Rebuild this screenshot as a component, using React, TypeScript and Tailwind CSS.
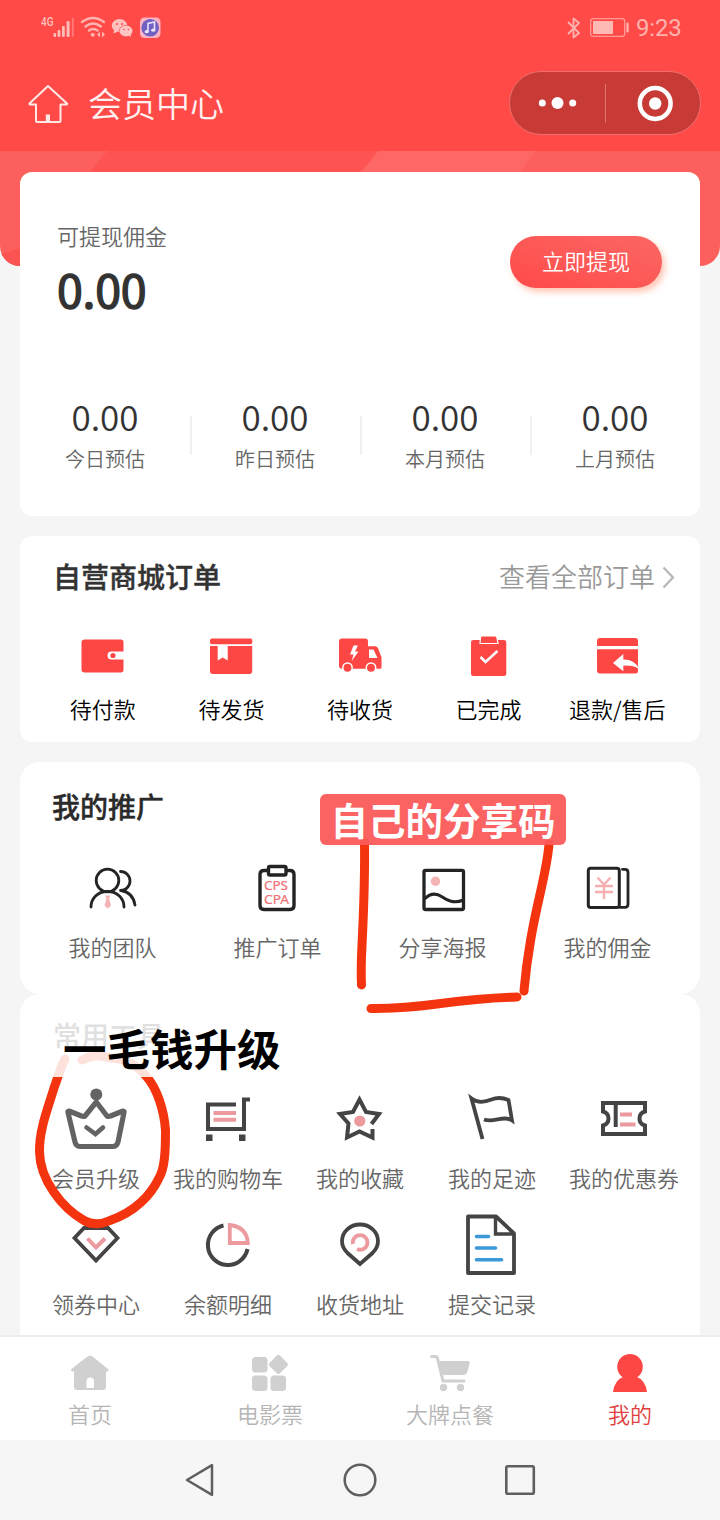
import type { ReactNode } from "react";

type IconProps = { box: string; w: number; h: number; children: ReactNode; className?: string };

function Icon({ box, w, h, children, className }: IconProps) {
  return (
    <svg viewBox={box} width={w} height={h} fill="none" className={className}>
      {children}
    </svg>
  );
}

const RED = "#fd4745";
const INK = "#242424";
const DARK = "#444444";
const PINK = "#ec9a9e";
const GREY = "#d0d0d0";

function StatusBar() {
  return (
    <div className="flex h-14 items-center justify-between pl-[41px] pr-[38px]">
      <Icon box="41 0 122 56" w={122} h={56}>
        <text x="41" y="26" fontSize="12.5" fontWeight="500" fontFamily="Roboto, sans-serif" fill="#ffc0bc" textLength="12.5" lengthAdjust="spacingAndGlyphs">4G</text>
        <g fill="#ffbdb8">
          <rect x="53.5" y="33" width="2.6" height="4" rx="1" />
          <rect x="57.6" y="30" width="2.8" height="7" rx="1" />
          <rect x="62" y="26" width="2.8" height="11" rx="1" />
          <rect x="66.6" y="21" width="3" height="16" rx="1" />
          <rect x="71.8" y="18" width="2" height="19" rx="1" opacity=".4" />
        </g>
        <g stroke="#ffb3ae" strokeWidth="2.4" strokeLinecap="round">
          <path d="M82 22q11-8 22 0M85.500 26.500q7.500-6 15.500 0M89 30.500q4-3 8.500 0" />
        </g>
        <circle cx="92.700" cy="34.700" r="2" fill="#ffb3ae" />
        <path d="m97 34.500 3-3v6zM105 34.500l-3-3v6z" fill="#ffb3ae" />
        <g fill="#ffc0bd">
          <ellipse cx="119.500" cy="25.500" rx="7.800" ry="6.500" />
          <path d="m114 29-.500 4.500 4.500-2z" />
        </g>
        <ellipse cx="126" cy="31" rx="6.800" ry="5.700" fill="#ffc7c3" stroke={RED} strokeWidth=".6" />
        <path d="m128 35 3 2-.600-3.500z" fill="#ffc7c3" />
        <g fill={RED}>
          <circle cx="117" cy="24" r="1" /><circle cx="122" cy="24" r="1" />
          <circle cx="124" cy="29.500" r=".8" /><circle cx="128.500" cy="29.500" r=".8" />
        </g>
        <rect x="140" y="17.500" width="20.500" height="20.500" rx="4.500" fill="#fbb3c3" />
        <circle cx="150.200" cy="27.700" r="8.800" fill="#7161c2" />
        <path d="M148 31.500v-8l6.500-1.500v8" stroke="#eae3fb" strokeWidth="1.600" />
        <ellipse cx="146.700" cy="31.700" rx="2.100" ry="1.600" fill="#eae3fb" />
        <ellipse cx="153.200" cy="30.200" rx="2.100" ry="1.600" fill="#eae3fb" />
      </Icon>
      <div className="flex items-center gap-[6px]">
        <Icon box="567 14 64 28" w={64} h={28}>
          <path d="m569 22 11 11-5.500 4.500v-19L580 23l-11 11" stroke="#ffb3ae" strokeWidth="1.800" strokeLinejoin="round" />
          <rect x="591.700" y="18.700" width="34" height="17.600" rx="2.500" stroke="#ff9b97" strokeWidth="1.300" />
          <rect x="594" y="21" width="20" height="13" fill="#ffb9b5" />
          <rect x="627.400" y="22.500" width="2.300" height="10" rx="1" fill="#ffb3ae" />
        </Icon>
        <span className="w-[46px] whitespace-nowrap font-[Roboto] text-[24px] leading-7 tracking-[-0.2px] text-[#ffb3ae]">9:23</span>
      </div>
    </div>
  );
}

function Header() {
  return (
    <header className="h-[151px] bg-[#ff4a48]">
      <StatusBar />
      <div className="flex h-[95px] items-center pl-[27px] pr-[19px]">
        <Icon box="27 82 42 42" w={42} h={42}>
          <path d="M48 85 29.500 102.500q-.500 1 1 1h5.500V120q0 1 1 1h22.500q1 0 1-1v-16.500H66q1.500 0 1-1Z" stroke="#ffe9e7" strokeWidth="2" strokeLinejoin="round" />
          <rect x="45.800" y="113.500" width="4.200" height="7" fill="#ffe9e7" />
        </Icon>
        <h1 className="ml-[19px] flex-1 pb-[2px] text-[34px] font-[350] leading-[46px] text-[#fff1f0]">会员中心</h1>
        <div className="mt-[-1px] flex h-[64px] w-[192px] rounded-full border border-[#e9706d] bg-[#c83a36]">
          <Icon box="510 72 190 62" w={190} h={62}>
            <g fill="#fff">
              <circle cx="542.300" cy="103" r="3.500" />
              <circle cx="557.500" cy="103" r="6" />
              <circle cx="572.700" cy="103" r="3.500" />
              <circle cx="655.200" cy="103.500" r="6.200" />
            </g>
            <path d="M605.500 84v38.500" stroke="#df7370" />
            <circle cx="655.200" cy="103.500" r="15.400" stroke="#fff" strokeWidth="4.500" />
          </Icon>
        </div>
      </div>
    </header>
  );
}

const stats = ["今日预估", "昨日预估", "本月预估", "上月预估"];

function Balance() {
  return (
    <section className="relative mx-5 mt-[-94px] h-[344px] rounded-[12px] bg-white pt-12">
      <div className="flex h-[104px] justify-between pl-[37px] pr-[38px]">
        <div>
          <p className="text-[22px] font-[350] leading-[30px] text-[#666]">可提现佣金</p>
          <p className="pt-[12px] text-[46.500px] leading-[52px] tracking-[-0.300px] text-[#333] [-webkit-text-stroke:1.4px_#333]">0.00</p>
        </div>
        <button className="mt-4 h-[52px] w-[152px] rounded-full bg-linear-to-tr from-[#ff4a49] to-[#fb6663] pb-[4px] text-[22px] font-[350] text-white shadow-[3px_4px_6px_rgba(255,130,90,0.45)]">立即提现</button>
      </div>
      <div className="grid grid-cols-4 pt-[72px]">
        {stats.map((name, i) => (
          <div key={name} className="relative text-center">
            <p className="text-[35px] font-[350] leading-[40px] text-[#333]">0.00</p>
            <p className="pt-[8px] text-[20px] font-[350] leading-[30px] text-[#666]">{name}</p>
            {i < 3 && <span className="absolute right-[-2px] top-5 h-[39px] w-[2px] bg-[#f0f0f0]" />}
          </div>
        ))}
      </div>
    </section>
  );
}

const orders = [
  {
    name: "待付款",
    icon: (
      <Icon box="78 632 50 48" w={50} h={48}>
        <path d="M84.500 639.500H121q2.500 0 2.500 3v9h-12a4 4 0 0 0 0 8h12v10q0 3-2.500 3H84.500q-3 0-3-3v-27q0-3 3-3Z" fill={RED} />
        <circle cx="113" cy="655.500" r="2.600" fill={RED} />
      </Icon>
    ),
  },
  {
    name: "待发货",
    icon: (
      <Icon box="206 632 50 48" w={50} h={48}>
        <rect x="210" y="638.500" width="42.300" height="5.800" rx="2" fill={RED} />
        <path d="M210 646h7.700v14.500l5-3 5 3V646h24.500v25q0 3-3 3H213q-3 0-3-3Z" fill={RED} />
      </Icon>
    ),
  },
  {
    name: "待收货",
    icon: (
      <Icon box="335 632 50 48" w={50} h={48}>
        <path d="M342 638.500h23q3 0 3 3v4.800h7q2 0 3 2l3.500 9v10q0 1.500-1.500 1.500h-38q-3 0-3-3v-24.300q0-3 3-3Z" fill={RED} />
        <path d="M369 649.500h4.500l4 8.500H369Z" fill="#fff" />
        <path d="m353.500 645.500-3.500 9h3.500l-1.800 6.500 6.800-9.500H355l3-6Z" fill="#fff" />
        <circle cx="347.500" cy="667.700" r="4.700" fill={RED} stroke="#fff" strokeWidth="1.500" />
        <circle cx="371" cy="667.700" r="4.700" fill={RED} stroke="#fff" strokeWidth="1.500" />
      </Icon>
    ),
  },
  {
    name: "已完成",
    icon: (
      <Icon box="464 632 50 48" w={50} h={48}>
        <rect x="471" y="640" width="35.300" height="36" rx="2.500" fill={RED} />
        <path d="M482 636h13q2 0 2 2l1 5.500h-18l.500-5.500q0-2 1.500-2Z" fill={RED} stroke="#fff" strokeWidth="1.200" />
        <path d="m480.500 657 5 5 12-11" stroke="#fff" strokeWidth="2.500" />
      </Icon>
    ),
  },
  {
    name: "退款/售后",
    icon: (
      <Icon box="592 632 50 48" w={50} h={48}>
        <path d="M600 638h35q3 0 3 3v5h-41v-5q0-3 3-3Z" fill={RED} />
        <path d="M597 649.300h41V671q0 2.500-2.500 2.500H600q-3 0-3-3Z" fill={RED} />
        <path d="m613 663 10.300-9v5.500q12 0 15.700 9.500-6-4-15.700-3.300v5.500Z" fill="#fff" />
      </Icon>
    ),
  },
];

function Orders() {
  return (
    <section className="mx-5 mt-5 h-[206px] rounded-[12px] bg-white pt-[20px]">
      <div className="flex h-10 items-center justify-between pl-[33px] pr-[24px]">
        <h2 className="text-[28px] font-medium leading-10 text-[#333] [-webkit-text-stroke:0.4px_#333]">自营商城订单</h2>
        <div className="flex items-center gap-[6px]">
          <span className="text-[26px] font-[350] leading-10 text-[#999]">查看全部订单</span>
          <Icon box="661 564 15 25" w={15} h={25}>
            <path d="m663.500 567.500 9.500 10-9.500 10" stroke="#b8b8b8" strokeWidth="2.300" />
          </Icon>
        </div>
      </div>
      <div className="grid grid-cols-5 px-[18.500px] pt-[36px]">
        {orders.map((o) => (
          <div key={o.name} className="flex flex-col items-center">
            {o.icon}
            <span className="whitespace-nowrap pt-[13px] text-[22px] font-[350] leading-[30px] text-black">{o.name}</span>
          </div>
        ))}
      </div>
    </section>
  );
}

const promos = [
  {
    name: "我的团队",
    icon: (
      <Icon box="85 862 56 52" w={56} h={52}>
        <g stroke={INK} strokeWidth="2.800" strokeLinecap="round">
          <circle cx="107.500" cy="880.500" r="11.300" />
          <path d="M91 907c0-8 6-15.500 16.500-15.500S124 899 124 907M120.500 871.500a9.500 9.500 0 0 1 0 19M121 890.500q12 2 14 14.500" />
        </g>
        <path d="M105 895.500h5.500l-1.500 3 2 7-3.200 3-3.300-3 2-7Z" fill="#f6b3b5" />
      </Icon>
    ),
  },
  {
    name: "推广订单",
    icon: (
      <Icon box="250 862 56 52" w={56} h={52}>
        <path d="M269 870.500h-5q-4 0-4 4v31q0 4 4 4h26q4 0 4-4v-31q0-4-4-4h-5" stroke={INK} strokeWidth="3.400" />
        <rect x="268.500" y="866.500" width="17.500" height="8.500" rx="1.500" stroke={INK} strokeWidth="3.400" />
        <g fontFamily="Noto Sans, sans-serif" fontSize="13" fill="#f07275" stroke="#f07275" strokeWidth=".2">
          <text x="264" y="890" textLength="24" lengthAdjust="spacingAndGlyphs">CPS</text>
          <text x="264" y="903.500" textLength="25" lengthAdjust="spacingAndGlyphs">CPA</text>
        </g>
      </Icon>
    ),
  },
  {
    name: "分享海报",
    icon: (
      <Icon box="415.500 862 56 52" w={56} h={52}>
        <rect x="424.500" y="870.300" width="39.500" height="39.200" rx="1.500" stroke={INK} strokeWidth="3.300" />
        <path d="M425 899c5-5 11-6.500 17-2.500 6 4 12 7.500 22 3.500" stroke={INK} strokeWidth="3" />
        <circle cx="436" cy="881.300" r="4.700" fill="#f6b3b5" />
      </Icon>
    ),
  },
  {
    name: "我的佣金",
    icon: (
      <Icon box="580 862 56 52" w={56} h={52}>
        <rect x="588.300" y="868.300" width="31" height="39.200" rx="2.500" stroke={INK} strokeWidth="3" />
        <path d="M622.500 869.300h2.500q3 0 3 3v32q0 3-3 3h-5" stroke={INK} strokeWidth="2.800" strokeLinecap="round" />
        <path d="m597.500 877.500 6.500 7 6.500-7M604 884.500V899M595 886h18M595 892h18" stroke="#f6aeb1" strokeWidth="2.300" />
      </Icon>
    ),
  },
];

function Promotion() {
  return (
    <section className="mx-5 mt-5 h-[232px] rounded-[20px] bg-white pt-[24px]">
      <h2 className="pl-[32px] text-[28px] font-medium leading-10 text-[#2a2a2a] [-webkit-text-stroke:0.4px_#2a2a2a]">我的推广</h2>
      <div className="mx-[10px] grid grid-cols-4 pt-[36px]">
        {promos.map((p) => (
          <div key={p.name} className="flex flex-col items-center">
            {p.icon}
            <span className="pt-[17px] text-[22px] font-[350] leading-[30px] text-[#666]">{p.name}</span>
          </div>
        ))}
      </div>
    </section>
  );
}

const tools = [
  {
    name: "会员升级",
    icon: (
      <Icon box="64 1086 64 66" w={64} h={66}>
        <circle cx="96.300" cy="1094.500" r="6" fill="#636363" />
        <path d="M96.300 1102 85 1116q-1.500 1-3.500 0l-12.500-5q-1.500 0-1 1.500l7 29.500q1 4.500 5 4.500h33q4 0 5-4.500l6-29.500q.500-1.500-1-1.500l-12.500 5q-2 1-3.500 0Z" stroke="#636363" strokeWidth="5.200" strokeLinejoin="round" />
        <path d="m86.500 1127.500 9 6.500 7.500-6.500" stroke="#636363" strokeWidth="4.600" strokeLinecap="round" />
      </Icon>
    ),
  },
  {
    name: "我的购物车",
    icon: (
      <Icon box="196 1086 64 66" w={64} h={66}>
        <path d="M236 1104.500h-28V1129h36v-29.500h6" stroke={DARK} strokeWidth="4" />
        <path d="M206 1134.500h6.500v6.500H206zM239 1134.500h6.500v6.500H239z" fill={DARK} />
        <path d="M213.500 1113h22.500M213.500 1119.800h22.500" stroke={PINK} strokeWidth="4" />
      </Icon>
    ),
  },
  {
    name: "我的收藏",
    icon: (
      <Icon box="328 1086 64 66" w={64} h={66}>
        <path d="m371.500 1124 7.500-10-13-2-6.500-12.500-6.500 12.500-13 2 8.500 9.500-1.500 14 12.500-6 13 6v-8.500" stroke={DARK} strokeWidth="4" />
        <circle cx="359.800" cy="1121" r="5.600" fill={PINK} />
      </Icon>
    ),
  },
  {
    name: "我的足迹",
    icon: (
      <Icon box="460 1086 64 66" w={64} h={66}>
        <path d="m482.500 1139-11-40.500c7 5.500 14 3.500 20 1 5-2 11-2 17 .5l3.500 20.500c-9-6-18 3-28-1" stroke={DARK} strokeWidth="3.800" />
      </Icon>
    ),
  },
  {
    name: "我的优惠券",
    icon: (
      <Icon box="592 1086 64 66" w={64} h={66}>
        <path d="M603 1103h42v8.500q-5.500 1.500-5.500 7t5.500 7v8.500h-42v-8.500q5.500-1.500 5.500-7t-5.500-7Z" stroke={DARK} strokeWidth="4" />
        <path d="M615.700 1104v23" stroke={DARK} strokeWidth="4" />
        <path d="M620 1114.500h12M620 1124.500h15.500" stroke={PINK} strokeWidth="4" />
      </Icon>
    ),
  },
  {
    name: "领券中心",
    icon: (
      <Icon box="64 1212 64 66" w={64} h={66}>
        <path d="M84 1228h24l9.500 10L96 1260.500 74.500 1238Z" stroke={DARK} strokeWidth="3.800" />
        <path d="m87.500 1238.500 8.500 9 9-9" stroke={PINK} strokeWidth="4" />
      </Icon>
    ),
  },
  {
    name: "余额明细",
    icon: (
      <Icon box="196 1212 64 66" w={64} h={66}>
        <path d="M223.500 1225.500a20 20 0 1 0 24 23.500" stroke={DARK} strokeWidth="4" />
        <path d="M229.800 1225v18h18q-1-16-18-18Z" stroke={PINK} strokeWidth="3.800" />
      </Icon>
    ),
  },
  {
    name: "收货地址",
    icon: (
      <Icon box="328 1212 64 66" w={64} h={66}>
        <path d="m360 1264-12.500-11q-5.500-5.500-5.500-12a18 16.500 0 0 1 36 0q0 6.500-5.500 12Z" stroke={DARK} strokeWidth="3.800" />
        <path d="M353 1244a7.300 7.300 0 1 1 4 5" stroke={PINK} strokeWidth="3.800" />
      </Icon>
    ),
  },
  {
    name: "提交记录",
    icon: (
      <Icon box="460 1212 64 66" w={64} h={66}>
        <path d="M468 1216.500h28l18 17v39.500h-46Z" stroke={DARK} strokeWidth="3.800" strokeLinejoin="round" />
        <path d="M495.500 1217.500v16.500h18" stroke={DARK} strokeWidth="3.400" />
        <path d="M476.500 1236.500h12M476.500 1248h19M476.500 1259.800h25" stroke="#3b99da" strokeWidth="3.600" strokeLinecap="round" />
      </Icon>
    ),
  },
];

function Tools() {
  return (
    <section className="mx-5 h-[341px] rounded-t-[20px] bg-white pt-[21px]">
      <h2 className="pl-[33px] text-[28px] font-medium leading-10 text-[#333]">常用工具</h2>
      <div className="mx-[10px] grid grid-cols-5 pt-[31px]">
        {tools.map((t) => (
          <div key={t.name} className="flex h-[126px] flex-col items-center">
            {t.icon}
            <span className="whitespace-nowrap pt-[10px] text-[22px] font-[350] leading-[30px] text-[#666]">{t.name}</span>
          </div>
        ))}
      </div>
    </section>
  );
}

const tabs = [
  {
    name: "首页",
    color: "text-[#b5b5b5]",
    icon: (
      <Icon box="68 1352 44 42" w={44} h={42}>
        <path d="M87.500 1356.500q2.500-1.500 5 0l15.500 12.500q1.500 2-.500 2.500h-1.500V1387q0 3-3 3H77q-3 0-3-3v-15.500h-2q-1.500-.500-.500-2.500ZM86.500 1388h7.500v-7q0-3.500-3.700-3.500t-3.800 3.500Z" fill={GREY} fillRule="evenodd" />
      </Icon>
    ),
  },
  {
    name: "电影票",
    color: "text-[#b5b5b5]",
    icon: (
      <Icon box="248 1352 44 42" w={44} h={42}>
        <g fill={GREY}>
          <rect x="252" y="1357" width="15.500" height="15.500" rx="3.500" />
          <rect x="252" y="1375.500" width="15.500" height="15.500" rx="3.500" />
          <rect x="270.500" y="1375.500" width="15.500" height="15.500" rx="3.500" />
          <rect x="271" y="1357" width="14.800" height="14.800" rx="2.500" transform="rotate(45 278.400 1364.400)" />
        </g>
      </Icon>
    ),
  },
  {
    name: "大牌点餐",
    color: "text-[#b5b5b5]",
    icon: (
      <Icon box="428 1352 44 42" w={44} h={42}>
        <path d="M431.500 1356.500h4q1.500 0 2 2l5.500 22.500h21" stroke={GREY} strokeWidth="3" strokeLinecap="round" />
        <path d="M438 1361h30q2 0 1.700 2l-2.500 9.500q-1 2.500-4 2.500h-22Z" fill={GREY} />
        <circle cx="443.500" cy="1387.500" r="3.700" fill={GREY} />
        <circle cx="460.500" cy="1387.500" r="3.700" fill={GREY} />
      </Icon>
    ),
  },
  {
    name: "我的",
    color: "text-[#e0403d]",
    icon: (
      <Icon box="608 1352 44 42" w={44} h={42}>
        <circle cx="630" cy="1366.800" r="12.800" fill={RED} />
        <path d="M613 1392q1.500-12 11-15.500h12q9.500 3.500 11 15.500Z" fill={RED} />
      </Icon>
    ),
  },
];

function Annotations() {
  return (
    <>
      <svg viewBox="0 0 720 1520" width="720" height="1520" fill="none" className="pointer-events-none absolute left-0 top-0">
        <g stroke="#f4340f" strokeWidth="9" strokeLinecap="round">
          <path d="M364.500 842C365 880 363.500 915 362 945C361 965 361 975 361.500 985" />
          <path d="M549 844C547 872 536 905 530 944C526 967 525 980 524 991" />
          <path d="M371 1008.500C430 1009 445 999 517 997" />
          <path d="M65 1059C61 1066 58 1077 54 1088C48 1108 39 1130 39.500 1152C40 1180 62 1208 84 1220.500Q96 1227 110 1220.500C135 1212 151 1195 159 1178C165 1168 165.500 1150 165.500 1130C164 1110 157 1088 146 1076C138 1066 125 1058 110 1058C98 1054 90 1056 82 1060" />
        </g>
      </svg>
      <div className="absolute left-[50px] top-[1015px] flex h-[62px] w-[246px] items-center bg-white/85 pl-[13px] pt-[4px] text-[43.500px] font-bold leading-[60px] text-black">一毛钱升级</div>
      <div className="absolute left-[320px] top-[794px] flex h-[51px] w-[246px] items-center justify-center rounded-[6px] bg-[#fb5a5a]/95 pb-[2px] text-[37.500px] font-bold leading-[50px] text-white">自己的分享码</div>
    </>
  );
}

export default function App() {
  return (
    <div className="relative h-[1520px] w-[720px] overflow-hidden bg-[#f5f5f5] font-['Noto_Sans_CJK_SC',sans-serif]">
      <Header />
      <div className="h-[115px] overflow-hidden rounded-b-[20px] bg-[#fd5f5d]">
        <Icon box="0 151 720 115" w={720} h={115} className="block">
          <path d="M107 151H380L360 172H90Z" fill="#fd5453" />
          <path d="M378 151h157l-15 21H362Z" fill="#fd6765" />
          <path d="M0 254q10-2 20-6v20H0Z" fill="#fb5351" />
        </Icon>
      </div>
      <Balance />
      <Orders />
      <Promotion />
      <Tools />
      <nav className="grid h-[105px] grid-cols-4 border-t-2 border-[#ededed] bg-white pt-[15px]">
        {tabs.map((t) => (
          <div key={t.name} className="flex flex-col items-center">
            {t.icon}
            <span className={`pt-[4px] text-[22px] font-[350] leading-[30px] ${t.color}`}>{t.name}</span>
          </div>
        ))}
      </nav>
      <footer className="flex h-20 items-center justify-center gap-[120px] bg-[#f6f6f6]">
        <Icon box="180 1460 40 40" w={40} h={40}>
          <path d="m187 1480 25-14.800v29.600Z" stroke="#5f5f5f" strokeWidth="2.500" strokeLinejoin="round" />
        </Icon>
        <Icon box="340 1460 40 40" w={40} h={40}>
          <circle cx="360" cy="1480" r="15.300" stroke="#5f5f5f" strokeWidth="2.500" />
        </Icon>
        <Icon box="500 1460 40 40" w={40} h={40}>
          <rect x="506.300" y="1466.300" width="27.500" height="27.500" rx="1.500" stroke="#5f5f5f" strokeWidth="2.600" />
        </Icon>
      </footer>
      <Annotations />
    </div>
  );
}
